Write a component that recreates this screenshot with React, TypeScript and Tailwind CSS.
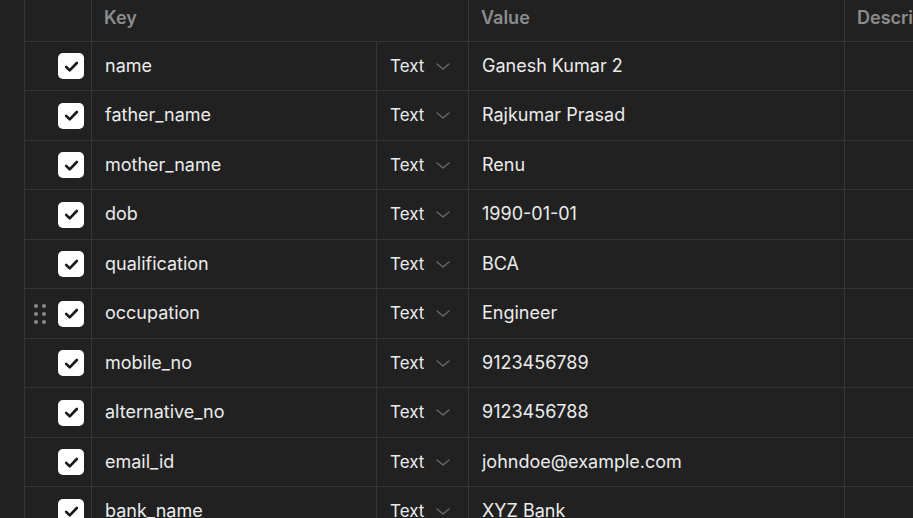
import React from 'react';

const rows = [
  { key: 'name', value: 'Ganesh Kumar 2' },
  { key: 'father_name', value: 'Rajkumar Prasad' },
  { key: 'mother_name', value: 'Renu' },
  { key: 'dob', value: '1990-01-01' },
  { key: 'qualification', value: 'BCA' },
  { key: 'occupation', value: 'Engineer', hover: true },
  { key: 'mobile_no', value: '9123456789' },
  { key: 'alternative_no', value: '9123456788' },
  { key: 'email_id', value: 'johndoe@example.com' },
  { key: 'bank_name', value: 'XYZ Bank' },
];

const Check = () => (
  <div className="w-[26px] h-[26px] rounded-[5px] bg-white flex items-center justify-center">
    <svg width="17" height="17" viewBox="0 0 24 24" fill="none" stroke="#1a1a1a" strokeWidth="3.8" strokeLinecap="round" strokeLinejoin="round">
      <path d="M4.5 12.5l5 5L19.5 7" />
    </svg>
  </div>
);

const Grip = () => (
  <div className="grid grid-cols-2 gap-x-[4px] gap-y-[4px] mr-[12px]">
    {Array.from({ length: 6 }).map((_, i) => (
      <span key={i} className="w-[4px] h-[4px] rounded-full bg-[#8a8a8a]" />
    ))}
  </div>
);

// flat chevron used by the type select
const Chevron = () => (
  <svg width="14" height="7" viewBox="0 0 14 7" fill="none" stroke="#6a6a6a" strokeWidth="1.4" strokeLinecap="round" strokeLinejoin="round" className="ml-[12px]">
    <path d="M1 1l6 5 6-5" />
  </svg>
);

export default function App() {
  return (
    <div className="w-[913px] h-[518px] overflow-hidden bg-[#212121] text-[#ececec] flex" style={{ fontFamily: 'Inter, "Noto Sans", sans-serif' }}>
      {/* left gutter */}
      <div className="w-[25px] shrink-0 border-r border-[#353535]" />

      <div className="flex-1 min-w-0">
        {/* header */}
        <div className="flex h-[42px] border-b border-[#353535] text-[18px] font-semibold text-[#8c8c8c]">
          <div className="w-[67px] shrink-0 border-r border-[#353535]" />
          <div className="w-[377px] shrink-0 border-r border-[#353535] pl-[12px] pt-[4px]">Key</div>
          <div className="w-[376px] shrink-0 border-r border-[#353535] pl-[12px] pt-[4px]">Value</div>
          <div className="flex-1 pl-[12px] pt-[4px] whitespace-nowrap">Description</div>
        </div>

        {rows.map((r, i) => (
          <div key={r.key} className={`flex border-b border-[#353535] text-[18px] ${i % 2 === 0 ? 'h-[49px]' : 'h-[50px]'}`}>
            <div className="w-[67px] shrink-0 border-r border-[#353535] flex items-center justify-end pr-[7px]">
              {r.hover && <Grip />}
              <Check />
            </div>
            <div className="w-[285px] shrink-0 border-r border-[#353535] flex items-center pl-[13px] pb-[2px]">{r.key}</div>
            <div className="w-[92px] shrink-0 border-r border-[#353535] flex items-center pl-[13px] text-[17px]">
              <span className="leading-none">Text</span>
              <Chevron />
            </div>
            <div className="w-[376px] shrink-0 border-r border-[#353535] flex items-center pl-[13px] pb-[2px]">{r.value}</div>
            <div className="flex-1" />
          </div>
        ))}
      </div>
    </div>
  );
}
